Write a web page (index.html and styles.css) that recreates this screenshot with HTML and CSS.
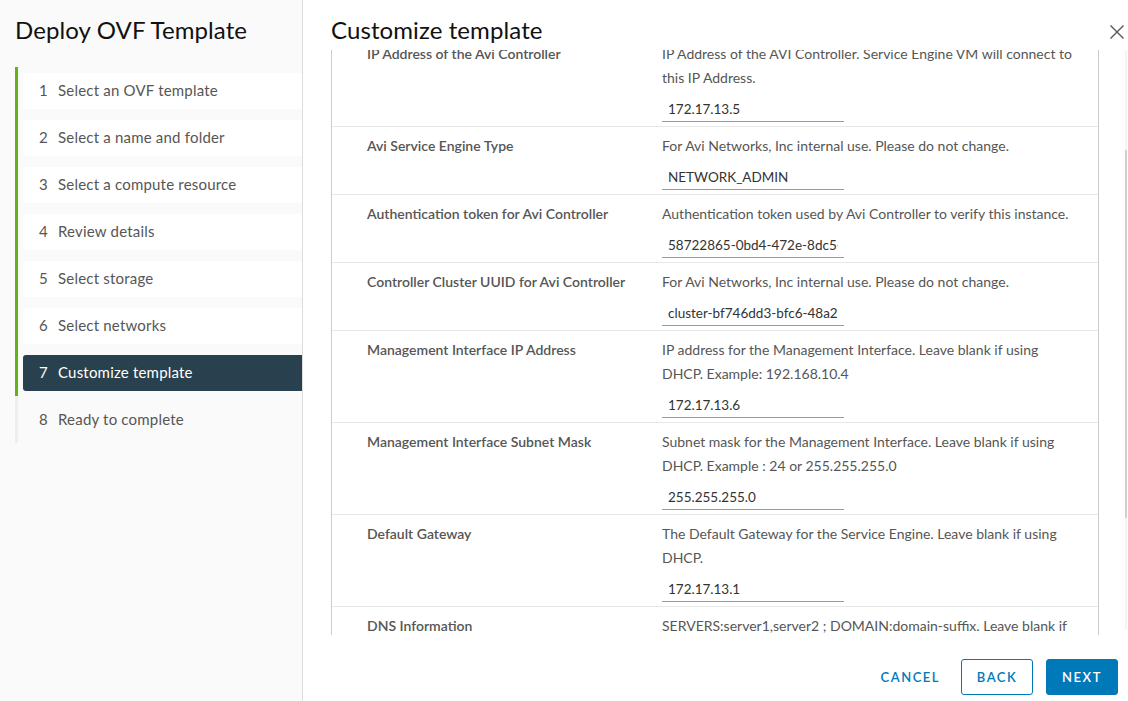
FILE: index.html
```html
<!DOCTYPE html>
<html>
<head>
<meta charset="utf-8">
<link rel="stylesheet" href="styles.css">
</head>
<body>
<div class="wizard">
  <aside class="sidebar">
    <h1 class="wiz-title">Deploy OVF Template</h1>
    <ol class="steps">
      <li class="step done"><div class="step-box"><span class="num">1</span>Select an OVF template</div></li>
      <li class="step done"><div class="step-box"><span class="num">2</span>Select a name and folder</div></li>
      <li class="step done"><div class="step-box"><span class="num">3</span>Select a compute resource</div></li>
      <li class="step done"><div class="step-box"><span class="num">4</span>Review details</div></li>
      <li class="step done"><div class="step-box"><span class="num">5</span>Select storage</div></li>
      <li class="step done"><div class="step-box"><span class="num">6</span>Select networks</div></li>
      <li class="step done current"><div class="step-box"><span class="num">7</span>Customize template</div></li>
      <li class="step todo"><div class="step-box"><span class="num">8</span>Ready to complete</div></li>
    </ol>
  </aside>
  <main class="main">
    <header class="header">
      <h2 class="page-title">Customize template</h2>
      <button class="close" aria-label="Close">
        <svg width="16" height="16" viewBox="0 0 16 16"><path d="M1.5 1.5 L14.5 14.5 M14.5 1.5 L1.5 14.5" stroke="#555" stroke-width="1.4" fill="none"/></svg>
      </button>
    </header>
    <section class="content">
      <div class="table">
        <div class="rows">
          <div class="row">
            <div class="label">IP Address of the Avi Controller</div>
            <div class="desc">IP Address of the AVI Controller. Service Engine VM will connect to<br>this IP Address.
              <input class="field" readonly value="172.17.13.5"></div>
          </div>
          <div class="row">
            <div class="label">Avi Service Engine Type</div>
            <div class="desc">For Avi Networks, Inc internal use. Please do not change.
              <input class="field" readonly value="NETWORK_ADMIN"></div>
          </div>
          <div class="row">
            <div class="label">Authentication token for Avi Controller</div>
            <div class="desc">Authentication token used by Avi Controller to verify this instance.
              <input class="field" readonly value="58722865-0bd4-472e-8dc5-7a1b2c3d4e5f"></div>
          </div>
          <div class="row">
            <div class="label">Controller Cluster UUID for Avi Controller</div>
            <div class="desc">For Avi Networks, Inc internal use. Please do not change.
              <input class="field" readonly value="cluster-bf746dd3-bfc6-48a2-9e1f-3c5d7a8b9e0f"></div>
          </div>
          <div class="row">
            <div class="label">Management Interface IP Address</div>
            <div class="desc">IP address for the Management Interface. Leave blank if using<br>DHCP. Example: 192.168.10.4
              <input class="field" readonly value="172.17.13.6"></div>
          </div>
          <div class="row">
            <div class="label">Management Interface Subnet Mask</div>
            <div class="desc">Subnet mask for the Management Interface. Leave blank if using<br>DHCP. Example : 24 or 255.255.255.0
              <input class="field" readonly value="255.255.255.0"></div>
          </div>
          <div class="row">
            <div class="label">Default Gateway</div>
            <div class="desc">The Default Gateway for the Service Engine. Leave blank if using<br>DHCP.
              <input class="field" readonly value="172.17.13.1"></div>
          </div>
          <div class="row">
            <div class="label">DNS Information</div>
            <div class="desc">SERVERS:server1,server2 ; DOMAIN:domain-suffix. Leave blank if<br>using DHCP.
              <input class="field" readonly value=""></div>
          </div>
        </div>
      </div>
      <div class="scrollbar"><div class="thumb"></div></div>
    </section>
    <footer class="footer">
      <button class="btn btn-link">CANCEL</button>
      <button class="btn btn-outline">BACK</button>
      <button class="btn btn-primary">NEXT</button>
    </footer>
  </main>
</div>
</body>
</html>
```
FILE: styles.css
```css
* { box-sizing: border-box; }
html, body { margin: 0; padding: 0; }
body {
  font-family: Lato, "Open Sans", sans-serif;
  color: #565656;
  background: #fff;
}
.wizard {
  display: flex;
  width: 1128px;
  height: 701px;
  overflow: hidden;
}
.sidebar {
  width: 303px;
  flex: none;
  background: #fafafa;
  border-right: 1px solid #dddddd;
  padding: 16px 0 0 15px;
}
.wiz-title {
  margin: 0;
  font-size: 24px;
  line-height: 28px;
  font-weight: 400;
  color: #111;
  letter-spacing: 0.1px;
}
.steps {
  list-style: none;
  margin: 23px 0 0 0;
  padding: 0;
}
.step {
  border-left: 3px solid #60b515;
  padding: 6px 0 5px 5px;
}
.step.todo { border-left-color: #eeeeee; }
.step-box {
  height: 36px;
  display: flex;
  align-items: center;
  padding: 0 0 2px 16px;
  background: #fff;
  border-radius: 3px 0 0 3px;
  font-size: 15px;
  letter-spacing: 0.2px;
  color: #565656;
}
.step.current .step-box {
  background: #29414e;
  color: #fff;
}
.step.todo .step-box { background: transparent; }
.num { width: 19px; flex: none; }

.main {
  flex: 1;
  display: flex;
  flex-direction: column;
  padding-left: 28px;
}
.header {
  height: 50px;
  display: flex;
  align-items: flex-start;
  justify-content: space-between;
  padding-top: 16px;
}
.page-title {
  margin: 0;
  font-size: 24px;
  line-height: 28px;
  font-weight: 400;
  color: #111;
  letter-spacing: 0.1px;
}
.close {
  border: 0;
  background: none;
  padding: 0;
  margin: 8px 3px 0 0;
  width: 16px;
  height: 16px;
  cursor: pointer;
}
.close svg { display: block; }
.content {
  height: 585px;
  display: flex;
}
.table {
  width: 768px;
  flex: none;
  border-left: 1px solid #cccccc;
  border-right: 1px solid #cccccc;
  overflow: hidden;
}
.rows { margin-top: -15px; }
.row {
  display: grid;
  grid-template-columns: 295px 1fr;
  padding: 7px 8px 4px 35px;
  border-bottom: 1px solid #e8e8e8;
  font-size: 14px;
  line-height: 24px;
}
.label {
  font-weight: 600;
  color: #565656;
}
.desc { color: #565656; white-space: nowrap; }
.field {
  display: block;
  width: 182px;
  height: 26px;
  margin-top: 6px;
  padding: 0 6px;
  border: 0;
  border-bottom: 1px solid #9a9a9a;
  font-family: Lato, "Open Sans", sans-serif;
  font-size: 13.5px;
  color: #333;
  background: transparent;
  outline: none;
}
.scrollbar {
  margin-left: 26px;
  width: 2px;
  height: 580px;
  background: #f4f4f4;
  padding-top: 100px;
}
.thumb {
  width: 2px;
  height: 368px;
  background: #cfcfcf;
}
.footer {
  flex: 1;
  display: flex;
  justify-content: flex-end;
  align-items: flex-start;
  padding: 24px 10px 0 0;
}
.btn {
  height: 36px;
  min-width: 72px;
  padding: 0 12px;
  border-radius: 3px;
  font-family: Lato, "Open Sans", sans-serif;
  font-size: 13px;
  font-weight: 600;
  letter-spacing: 1.5px;
  cursor: pointer;
}
.btn-link {
  border: 0;
  background: none;
  color: #0079b8;
  margin-right: 9px;
}
.btn-outline {
  border: 1px solid #0079b8;
  background: #fff;
  color: #0079b8;
  margin-right: 13px;
}
.btn-primary {
  border: 1px solid #0079b8;
  background: #0079b8;
  color: #fff;
}
```
